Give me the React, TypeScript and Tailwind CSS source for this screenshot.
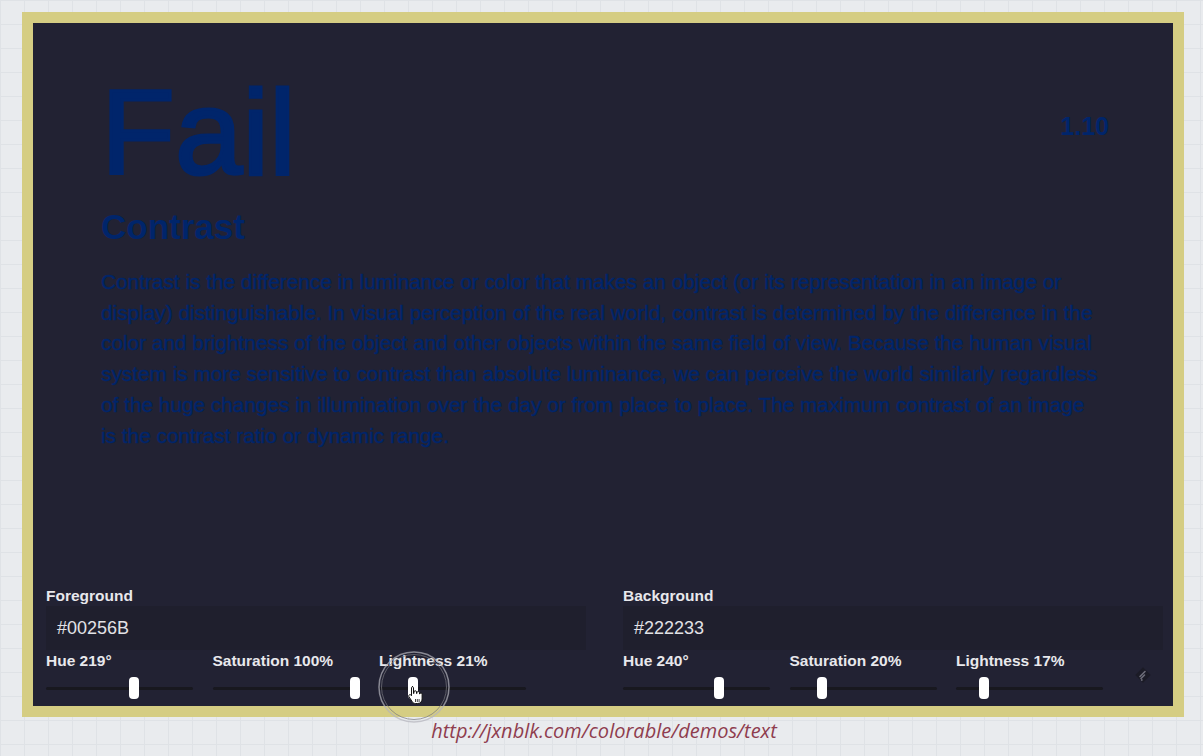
import React from 'react';

const paragraph =
  'Contrast is the difference in luminance or color that makes an object (or its representation in an image or display) distinguishable. In visual perception of the real world, contrast is determined by the difference in the color and brightness of the object and other objects within the same field of view. Because the human visual system is more sensitive to contrast than absolute luminance, we can perceive the world similarly regardless of the huge changes in illumination over the day or from place to place. The maximum contrast of an image is the contrast ratio or dynamic range.';

interface SliderProps {
  label: string;
  value: number;
  max: number;
}

const Slider = ({ label, value, max }: SliderProps) => {
  // thumb travels the track minus its own width
  const left = (value / max) * 137;
  return (
    <div className="w-[166.5px] shrink-0">
      <div className="text-[15.5px] font-bold leading-[20px] text-[#e8e8ec]">{label}</div>
      <div className="relative h-[34px] w-[147px]">
        <div className="absolute left-0 right-0 top-[16px] h-[3px] rounded-full bg-[#18181f]" />
        <div
          className="absolute top-[6px] h-[22px] w-[10px] rounded-[4px] bg-white"
          style={{ left: `${left}px` }}
        />
      </div>
    </div>
  );
};

interface ColorControlProps {
  title: string;
  hex: string;
  hue: number;
  sat: number;
  light: number;
  showLogo?: boolean;
}

const ColorControl = ({ title, hex, hue, sat, light, showLogo }: ColorControlProps) => (
  <div>
    <div className="text-[15.5px] font-bold leading-[20px] text-[#e8e8ec]">{title}</div>
    <div className="mt-[0.5px] flex h-[44px] items-center bg-[#1f1f2d] pl-[11px] text-[18px] text-[#e2e2e6]">
      {hex}
    </div>
    <div className="mt-[1px] flex">
      <Slider label={`Hue ${hue}°`} value={hue} max={360} />
      <Slider label={`Saturation ${sat}%`} value={sat} max={100} />
      <Slider label={`Lightness ${light}%`} value={light} max={100} />
      {showLogo && (
        <div className="flex flex-1 justify-center pt-[16px]">
          <svg width="16" height="16" viewBox="0 0 16 16">
            <rect x="2.5" y="2.5" width="11" height="11" transform="rotate(45 8 8)" fill="#1b1b26" />
            <path d="M5 9.5 L10 4.5 M6 11.5 L9.5 8" stroke="#6c6c78" strokeWidth="1.6" strokeLinecap="round" />
            <circle cx="6.8" cy="13" r="0.9" fill="#6c6c78" />
          </svg>
        </div>
      )}
    </div>
  </div>
);

export default function App() {
  return (
    <div className="relative h-[756px] w-full overflow-hidden bg-[#e9ebee] bg-[linear-gradient(#dfe2e6_1px,transparent_1px),linear-gradient(90deg,#dfe2e6_1px,transparent_1px)] bg-[size:24px_24px] pl-[22px] pt-[12px] font-['Liberation_Sans',Arial,sans-serif]">
      <div className="h-[705px] w-[1162px] bg-[#d5cd83] p-[11px]">
        <div className="flex h-full flex-col justify-between bg-[#222233] pb-[1px]">
          {/* Preview */}
          <div className="pl-[68px] pr-[64px] pt-[49px] text-[#00256B]">
            <div className="flex items-start justify-between">
              <div className="text-[121px] leading-none [-webkit-text-stroke:3px_#00256B]">Fail</div>
              <div className="mt-[42px] text-[25px] font-bold leading-none">1.10</div>
            </div>
            <h2 className="mt-[16px] text-[35px] font-bold leading-none">Contrast</h2>
            <p className="mt-[23px] w-[1000px] text-[20.8px] leading-[30.7px] [-webkit-text-stroke:0.4px_#00256B]">
              {paragraph}
            </p>
          </div>

          {/* Controls */}
          <div className="grid grid-cols-2 gap-[37px] pl-[13px] pr-[10px]">
            <ColorControl title="Foreground" hex="#00256B" hue={219} sat={100} light={21} />
            <ColorControl title="Background" hex="#222233" hue={240} sat={20} light={17} showLogo />
          </div>
        </div>
      </div>

      <div className="mt-[1px] w-[1162px] pl-[2px] text-center font-['Open_Sans',sans-serif] text-[20px] italic leading-[26px] text-[#8f3d4e]">
        http://jxnblk.com/colorable/demos/text
      </div>

      {/* screen-recording click highlight */}
      <div className="pointer-events-none absolute left-[378px] top-[651px] h-[72px] w-[72px]">
        <svg width="72" height="72" viewBox="0 0 72 72">
          <circle cx="36" cy="36" r="35" fill="none" stroke="#b4b4bc" strokeOpacity="0.7" strokeWidth="1.5" />
          <circle cx="36" cy="36" r="32.5" fill="none" stroke="#77777f" strokeOpacity="0.7" strokeWidth="1" />
        </svg>
      </div>
      <div className="pointer-events-none absolute left-[406px] top-[685px]">
        <svg width="18" height="20" viewBox="0 0 18 20">
          <path
            d="M6 1.5c.9 0 1.5.7 1.5 1.5v5.5h.4V7c0-.8.6-1.3 1.3-1.3s1.3.5 1.3 1.3v1.5h.4v-.8c0-.7.6-1.2 1.3-1.2s1.3.5 1.3 1.2v1.3h.3c0-.6.5-1 1.1-1s1.2.4 1.2 1.1V14c0 2.6-1.8 4.5-4.5 4.5H9.5c-1.6 0-2.8-.9-3.5-2.1L2.9 11.7c-.4-.7-.2-1.5.5-1.9s1.4-.1 1.8.5l.3.5V3c0-.8.6-1.5 1.5-1.5z"
            fill="#ffffff"
            stroke="#111111"
            strokeWidth="1"
            strokeLinejoin="round"
          />
          <path d="M9.5 14v3M11.3 14v3M13.1 14v3" stroke="#111111" strokeWidth="0.8" />
        </svg>
      </div>
    </div>
  );
}
